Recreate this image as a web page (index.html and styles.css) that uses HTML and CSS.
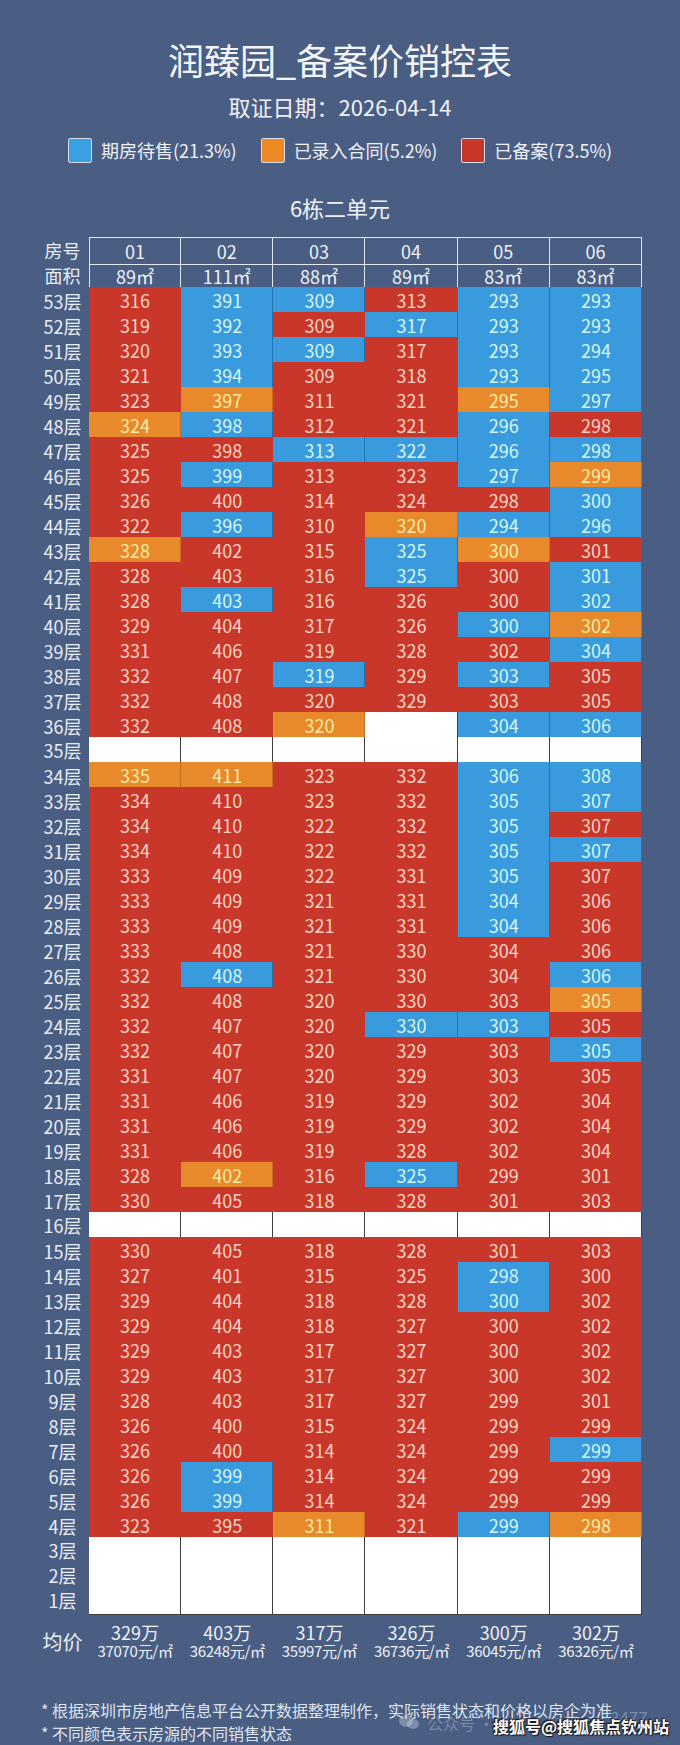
FILE: index.html
```html
<!DOCTYPE html>
<html lang="zh-CN">
<head>
<meta charset="utf-8">
<title>润臻园_备案价销控表</title>
<link rel="stylesheet" href="styles.css">
</head>
<body>
<div class="page">
  <h1 class="title">润臻园_备案价销控表</h1>
  <div class="date">取证日期：2026-04-14</div>
  <div class="legend">
    <div class="legend-item"><span class="swatch sw-b"></span>期房待售(21.3%)</div>
    <div class="legend-item"><span class="swatch sw-o"></span>已录入合同(5.2%)</div>
    <div class="legend-item"><span class="swatch sw-r"></span>已备案(73.5%)</div>
  </div>
  <div class="unit">6栋二单元</div>

  <div class="table">
    <div class="row head head1"><span class="fl">房号</span><span class="hc">01</span><span class="hc">02</span><span class="hc">03</span><span class="hc">04</span><span class="hc">05</span><span class="hc">06</span></div>
    <div class="row head"><span class="fl">面积</span><span class="hc">89㎡</span><span class="hc">111㎡</span><span class="hc">88㎡</span><span class="hc">89㎡</span><span class="hc">83㎡</span><span class="hc">83㎡</span></div>

    <div class="row"><span class="fl">53层</span><span class="c r">316</span><span class="c b">391</span><span class="c b">309</span><span class="c r">313</span><span class="c b">293</span><span class="c b">293</span></div>
    <div class="row"><span class="fl">52层</span><span class="c r">319</span><span class="c b">392</span><span class="c r">309</span><span class="c b">317</span><span class="c b">293</span><span class="c b">293</span></div>
    <div class="row"><span class="fl">51层</span><span class="c r">320</span><span class="c b">393</span><span class="c b">309</span><span class="c r">317</span><span class="c b">293</span><span class="c b">294</span></div>
    <div class="row"><span class="fl">50层</span><span class="c r">321</span><span class="c b">394</span><span class="c r">309</span><span class="c r">318</span><span class="c b">293</span><span class="c b">295</span></div>
    <div class="row"><span class="fl">49层</span><span class="c r">323</span><span class="c o">397</span><span class="c r">311</span><span class="c r">321</span><span class="c o">295</span><span class="c b">297</span></div>
    <div class="row"><span class="fl">48层</span><span class="c o">324</span><span class="c b">398</span><span class="c r">312</span><span class="c r">321</span><span class="c b">296</span><span class="c r">298</span></div>
    <div class="row"><span class="fl">47层</span><span class="c r">325</span><span class="c r">398</span><span class="c b">313</span><span class="c b">322</span><span class="c b">296</span><span class="c b">298</span></div>
    <div class="row"><span class="fl">46层</span><span class="c r">325</span><span class="c b">399</span><span class="c r">313</span><span class="c r">323</span><span class="c b">297</span><span class="c o">299</span></div>
    <div class="row"><span class="fl">45层</span><span class="c r">326</span><span class="c r">400</span><span class="c r">314</span><span class="c r">324</span><span class="c r">298</span><span class="c b">300</span></div>
    <div class="row"><span class="fl">44层</span><span class="c r">322</span><span class="c b">396</span><span class="c r">310</span><span class="c o">320</span><span class="c b">294</span><span class="c b">296</span></div>
    <div class="row"><span class="fl">43层</span><span class="c o">328</span><span class="c r">402</span><span class="c r">315</span><span class="c b">325</span><span class="c o">300</span><span class="c r">301</span></div>
    <div class="row"><span class="fl">42层</span><span class="c r">328</span><span class="c r">403</span><span class="c r">316</span><span class="c b">325</span><span class="c r">300</span><span class="c b">301</span></div>
    <div class="row"><span class="fl">41层</span><span class="c r">328</span><span class="c b">403</span><span class="c r">316</span><span class="c r">326</span><span class="c r">300</span><span class="c b">302</span></div>
    <div class="row"><span class="fl">40层</span><span class="c r">329</span><span class="c r">404</span><span class="c r">317</span><span class="c r">326</span><span class="c b">300</span><span class="c o">302</span></div>
    <div class="row"><span class="fl">39层</span><span class="c r">331</span><span class="c r">406</span><span class="c r">319</span><span class="c r">328</span><span class="c r">302</span><span class="c b">304</span></div>
    <div class="row"><span class="fl">38层</span><span class="c r">332</span><span class="c r">407</span><span class="c b">319</span><span class="c r">329</span><span class="c b">303</span><span class="c r">305</span></div>
    <div class="row"><span class="fl">37层</span><span class="c r">332</span><span class="c r">408</span><span class="c r">320</span><span class="c r">329</span><span class="c r">303</span><span class="c r">305</span></div>
    <div class="row"><span class="fl">36层</span><span class="c r">332</span><span class="c r">408</span><span class="c o">320</span><span class="c w"></span><span class="c b">304</span><span class="c b">306</span></div>
    <div class="row"><span class="fl">35层</span><span class="c w"></span><span class="c w"></span><span class="c w"></span><span class="c w"></span><span class="c w"></span><span class="c w"></span></div>
    <div class="row"><span class="fl">34层</span><span class="c o">335</span><span class="c o">411</span><span class="c r">323</span><span class="c r">332</span><span class="c b">306</span><span class="c b">308</span></div>
    <div class="row"><span class="fl">33层</span><span class="c r">334</span><span class="c r">410</span><span class="c r">323</span><span class="c r">332</span><span class="c b">305</span><span class="c b">307</span></div>
    <div class="row"><span class="fl">32层</span><span class="c r">334</span><span class="c r">410</span><span class="c r">322</span><span class="c r">332</span><span class="c b">305</span><span class="c r">307</span></div>
    <div class="row"><span class="fl">31层</span><span class="c r">334</span><span class="c r">410</span><span class="c r">322</span><span class="c r">332</span><span class="c b">305</span><span class="c b">307</span></div>
    <div class="row"><span class="fl">30层</span><span class="c r">333</span><span class="c r">409</span><span class="c r">322</span><span class="c r">331</span><span class="c b">305</span><span class="c r">307</span></div>
    <div class="row"><span class="fl">29层</span><span class="c r">333</span><span class="c r">409</span><span class="c r">321</span><span class="c r">331</span><span class="c b">304</span><span class="c r">306</span></div>
    <div class="row"><span class="fl">28层</span><span class="c r">333</span><span class="c r">409</span><span class="c r">321</span><span class="c r">331</span><span class="c b">304</span><span class="c r">306</span></div>
    <div class="row"><span class="fl">27层</span><span class="c r">333</span><span class="c r">408</span><span class="c r">321</span><span class="c r">330</span><span class="c r">304</span><span class="c r">306</span></div>
    <div class="row"><span class="fl">26层</span><span class="c r">332</span><span class="c b">408</span><span class="c r">321</span><span class="c r">330</span><span class="c r">304</span><span class="c b">306</span></div>
    <div class="row"><span class="fl">25层</span><span class="c r">332</span><span class="c r">408</span><span class="c r">320</span><span class="c r">330</span><span class="c r">303</span><span class="c o">305</span></div>
    <div class="row"><span class="fl">24层</span><span class="c r">332</span><span class="c r">407</span><span class="c r">320</span><span class="c b">330</span><span class="c b">303</span><span class="c r">305</span></div>
    <div class="row"><span class="fl">23层</span><span class="c r">332</span><span class="c r">407</span><span class="c r">320</span><span class="c r">329</span><span class="c r">303</span><span class="c b">305</span></div>
    <div class="row"><span class="fl">22层</span><span class="c r">331</span><span class="c r">407</span><span class="c r">320</span><span class="c r">329</span><span class="c r">303</span><span class="c r">305</span></div>
    <div class="row"><span class="fl">21层</span><span class="c r">331</span><span class="c r">406</span><span class="c r">319</span><span class="c r">329</span><span class="c r">302</span><span class="c r">304</span></div>
    <div class="row"><span class="fl">20层</span><span class="c r">331</span><span class="c r">406</span><span class="c r">319</span><span class="c r">329</span><span class="c r">302</span><span class="c r">304</span></div>
    <div class="row"><span class="fl">19层</span><span class="c r">331</span><span class="c r">406</span><span class="c r">319</span><span class="c r">328</span><span class="c r">302</span><span class="c r">304</span></div>
    <div class="row"><span class="fl">18层</span><span class="c r">328</span><span class="c o">402</span><span class="c r">316</span><span class="c b">325</span><span class="c r">299</span><span class="c r">301</span></div>
    <div class="row"><span class="fl">17层</span><span class="c r">330</span><span class="c r">405</span><span class="c r">318</span><span class="c r">328</span><span class="c r">301</span><span class="c r">303</span></div>
    <div class="row"><span class="fl">16层</span><span class="c w"></span><span class="c w"></span><span class="c w"></span><span class="c w"></span><span class="c w"></span><span class="c w"></span></div>
    <div class="row"><span class="fl">15层</span><span class="c r">330</span><span class="c r">405</span><span class="c r">318</span><span class="c r">328</span><span class="c r">301</span><span class="c r">303</span></div>
    <div class="row"><span class="fl">14层</span><span class="c r">327</span><span class="c r">401</span><span class="c r">315</span><span class="c r">325</span><span class="c b">298</span><span class="c r">300</span></div>
    <div class="row"><span class="fl">13层</span><span class="c r">329</span><span class="c r">404</span><span class="c r">318</span><span class="c r">328</span><span class="c b">300</span><span class="c r">302</span></div>
    <div class="row"><span class="fl">12层</span><span class="c r">329</span><span class="c r">404</span><span class="c r">318</span><span class="c r">327</span><span class="c r">300</span><span class="c r">302</span></div>
    <div class="row"><span class="fl">11层</span><span class="c r">329</span><span class="c r">403</span><span class="c r">317</span><span class="c r">327</span><span class="c r">300</span><span class="c r">302</span></div>
    <div class="row"><span class="fl">10层</span><span class="c r">329</span><span class="c r">403</span><span class="c r">317</span><span class="c r">327</span><span class="c r">300</span><span class="c r">302</span></div>
    <div class="row"><span class="fl">9层</span><span class="c r">328</span><span class="c r">403</span><span class="c r">317</span><span class="c r">327</span><span class="c r">299</span><span class="c r">301</span></div>
    <div class="row"><span class="fl">8层</span><span class="c r">326</span><span class="c r">400</span><span class="c r">315</span><span class="c r">324</span><span class="c r">299</span><span class="c r">299</span></div>
    <div class="row"><span class="fl">7层</span><span class="c r">326</span><span class="c r">400</span><span class="c r">314</span><span class="c r">324</span><span class="c r">299</span><span class="c b">299</span></div>
    <div class="row"><span class="fl">6层</span><span class="c r">326</span><span class="c b">399</span><span class="c r">314</span><span class="c r">324</span><span class="c r">299</span><span class="c r">299</span></div>
    <div class="row"><span class="fl">5层</span><span class="c r">326</span><span class="c b">399</span><span class="c r">314</span><span class="c r">324</span><span class="c r">299</span><span class="c r">299</span></div>
    <div class="row"><span class="fl">4层</span><span class="c r">323</span><span class="c r">395</span><span class="c o">311</span><span class="c r">321</span><span class="c b">299</span><span class="c o">298</span></div>
    <div class="row"><span class="fl">3层</span><span class="c w"></span><span class="c w"></span><span class="c w"></span><span class="c w"></span><span class="c w"></span><span class="c w"></span></div>
    <div class="row"><span class="fl">2层</span><span class="c w"></span><span class="c w"></span><span class="c w"></span><span class="c w"></span><span class="c w"></span><span class="c w"></span></div>
    <div class="row"><span class="fl">1层</span><span class="c w"></span><span class="c w"></span><span class="c w"></span><span class="c w"></span><span class="c w"></span><span class="c w"></span></div>
  </div>

  <div class="avg">
    <span class="avg-label">均价</span>
    <div class="avg-cell"><div class="price">329万</div><div class="per">37070元/㎡</div></div>
    <div class="avg-cell"><div class="price">403万</div><div class="per">36248元/㎡</div></div>
    <div class="avg-cell"><div class="price">317万</div><div class="per">35997元/㎡</div></div>
    <div class="avg-cell"><div class="price">326万</div><div class="per">36736元/㎡</div></div>
    <div class="avg-cell"><div class="price">300万</div><div class="per">36045元/㎡</div></div>
    <div class="avg-cell"><div class="price">302万</div><div class="per">36326元/㎡</div></div>
  </div>

  <div class="notes">
    <p>* 根据深圳市房地产信息平台公开数据整理制作，实际销售状态和价格以房企为准</p>
    <p>* 不同颜色表示房源的不同销售状态</p>
  </div>

  <div class="wm-gzh">
    <svg class="wm-icon" width="22" height="16" viewBox="0 0 22 16"><ellipse cx="8" cy="7" rx="7" ry="6" fill="currentColor"/><ellipse cx="15" cy="10" rx="6" ry="5" fill="currentColor"/></svg>
    <span class="wm-gzh-text">公众号 ·</span>
    <span class="wm-num">3477</span>
  </div>
  <div class="wm-sohu">搜狐号@搜狐焦点钦州站</div>
</div>
</body>
</html>
```

FILE: styles.css
```css
html, body {
  margin: 0;
  padding: 0;
  background: #4a5d83;
}

body {
  font-family: "Noto Sans CJK SC", "Microsoft YaHei", sans-serif;
  color: #eef2f7;
}

.page {
  position: relative;
  width: 680px;
  height: 1745px;
  overflow: hidden;
}

.title {
  margin: 0;
  padding-top: 35px;
  font-size: 36px;
  line-height: 48px;
  font-weight: 400;
  text-align: center;
  color: #f2f5f9;
}

.date {
  margin-top: 8px;
  font-size: 22px;
  line-height: 30px;
  text-align: center;
  color: #eef2f7;
}

.legend {
  margin-top: 16px;
  height: 26px;
  display: flex;
  justify-content: center;
  align-items: center;
  gap: 24px;
  font-size: 18px;
  line-height: 26px;
  color: #eef2f7;
}

.legend-item {
  display: flex;
  align-items: center;
  gap: 9px;
}

.swatch {
  display: block;
  width: 24px;
  height: 25px;
  box-sizing: border-box;
  border: 1px solid #d5deea;
  border-radius: 2px;
}

.sw-b { background: #3aa0e2; }
.sw-o { background: #ee8a24; }
.sw-r { background: #c8372a; }

.unit {
  margin-top: 29px;
  font-size: 22px;
  line-height: 30px;
  text-align: center;
}

.table {
  margin: 15px 0 0 36px;
  width: 606px;
}

.row {
  display: grid;
  grid-template-columns: 53px repeat(6, 1fr);
  height: 25px;
}

.fl {
  display: flex;
  align-items: center;
  justify-content: center;
  font-size: 18px;
  padding-bottom: 2px;
  box-sizing: border-box;
  color: #e9eef5;
  white-space: nowrap;
}

.hc {
  display: flex;
  align-items: center;
  justify-content: center;
  box-sizing: border-box;
  font-size: 18px;
  color: #eef2f7;
  border-right: 1px solid #e3e9f1;
  border-bottom: 1px solid #e3e9f1;
}

.head1 .hc {
  border-top: 1px solid #e3e9f1;
}

.hc:nth-child(2) {
  border-left: 1px solid #e3e9f1;
}

.c {
  display: flex;
  align-items: center;
  justify-content: center;
  box-sizing: border-box;
  font-size: 18px;
  padding-bottom: 3px;
}

.r {
  background: #c8372a;
  color: #fbd2c3;
}

.b {
  background: #3a9ade;
  color: #d3f7f2;
  box-shadow: inset -1px -1px 0 #2371b0;
}

.o {
  background: #e8892b;
  color: #fbeba4;
  box-shadow: inset -1px -1px 0 #c66e1e;
}

.w {
  background: #ffffff;
  box-shadow: inset -1px -1px 0 #3f3f3f;
}

.avg {
  margin: 10px 0 0 36px;
  width: 606px;
  display: grid;
  grid-template-columns: 53px repeat(6, 1fr);
}

.avg-label {
  display: flex;
  align-items: center;
  justify-content: center;
  font-size: 20px;
  color: #e9eef5;
  padding-top: 2px;
}

.avg-cell {
  display: flex;
  flex-direction: column;
  align-items: center;
  color: #eef2f7;
}

.price {
  font-size: 18px;
  line-height: 20px;
}

.per {
  font-size: 15px;
  line-height: 17px;
  letter-spacing: -0.3px;
  white-space: nowrap;
}

.notes {
  margin-top: 40px;
  padding-left: 41px;
  font-size: 16px;
  line-height: 23px;
  color: #dfe5ee;
}

.notes p {
  margin: 0;
  white-space: nowrap;
}

.wm-gzh {
  position: absolute;
  left: 398px;
  top: 1708px;
  width: 270px;
  height: 24px;
  color: rgba(220, 228, 240, 0.35);
  font-size: 16px;
  line-height: 20px;
}

.wm-icon {
  position: absolute;
  left: 0;
  top: 6px;
}

.wm-gzh-text {
  position: absolute;
  left: 29px;
  top: 5px;
}

.wm-num {
  position: absolute;
  left: 212px;
  top: 0;
  font-size: 17px;
}

.wm-sohu {
  position: absolute;
  left: 493px;
  top: 1715px;
  font-size: 16px;
  line-height: 22px;
  font-weight: 700;
  color: #ffffff;
  white-space: nowrap;
  text-shadow: 0 0 2px #1a1a1a, 1px 1px 1px #1a1a1a, -1px -1px 1px #1a1a1a;
}
```
